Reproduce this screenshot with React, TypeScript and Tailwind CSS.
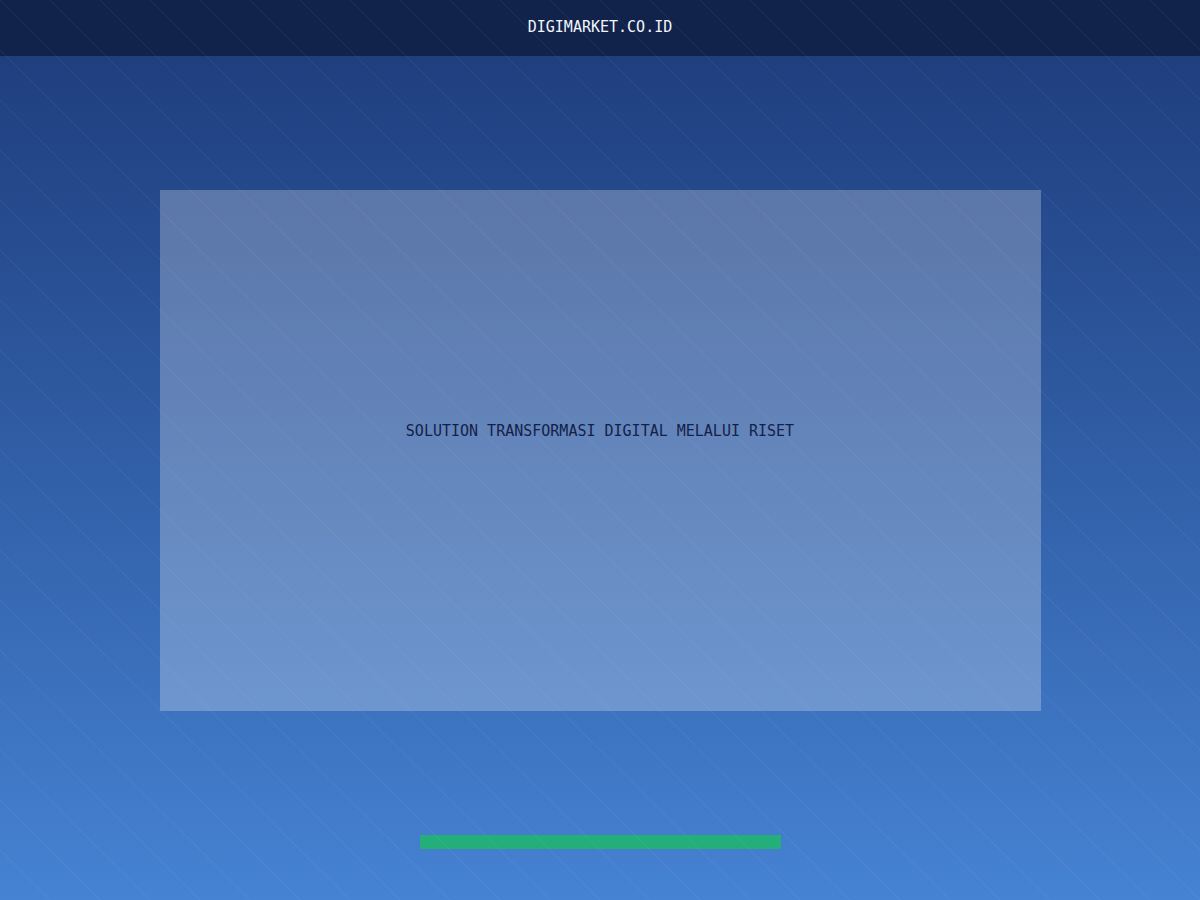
export default function App() {
  return (
    <div className="relative flex h-[900px] w-full flex-col overflow-hidden bg-gradient-to-b from-[#1d3a79] to-[#4683d3] font-['DejaVu_Sans_Mono','Liberation_Mono',monospace]">
      <header className="flex h-14 shrink-0 items-center justify-center bg-[#11234b] pb-[2px] text-[15px] text-[#f2f5fb]">
        DIGIMARKET.CO.ID
      </header>
      <main className="flex flex-1 flex-col items-center pt-[134px]">
        <section className="flex h-[521px] w-[881px] flex-col items-center bg-white/25 pt-[232px] text-[15px] leading-[18px] text-[#13214a]">
          SOLUTION TRANSFORMASI DIGITAL MELALUI RISET
        </section>
        <div className="mt-[124px] h-[14px] w-[361px] bg-[#23ae7a]" />
      </main>
      {/* diagonal hairline texture over the whole page, one line per 50px tile */}
      <div className="pointer-events-none absolute inset-0 bg-[length:50px_50px] bg-[linear-gradient(45deg,transparent_49.3%,rgba(255,255,255,0.06)_49.3%,rgba(255,255,255,0.06)_50.7%,transparent_50.7%)]" />
    </div>
  );
}
